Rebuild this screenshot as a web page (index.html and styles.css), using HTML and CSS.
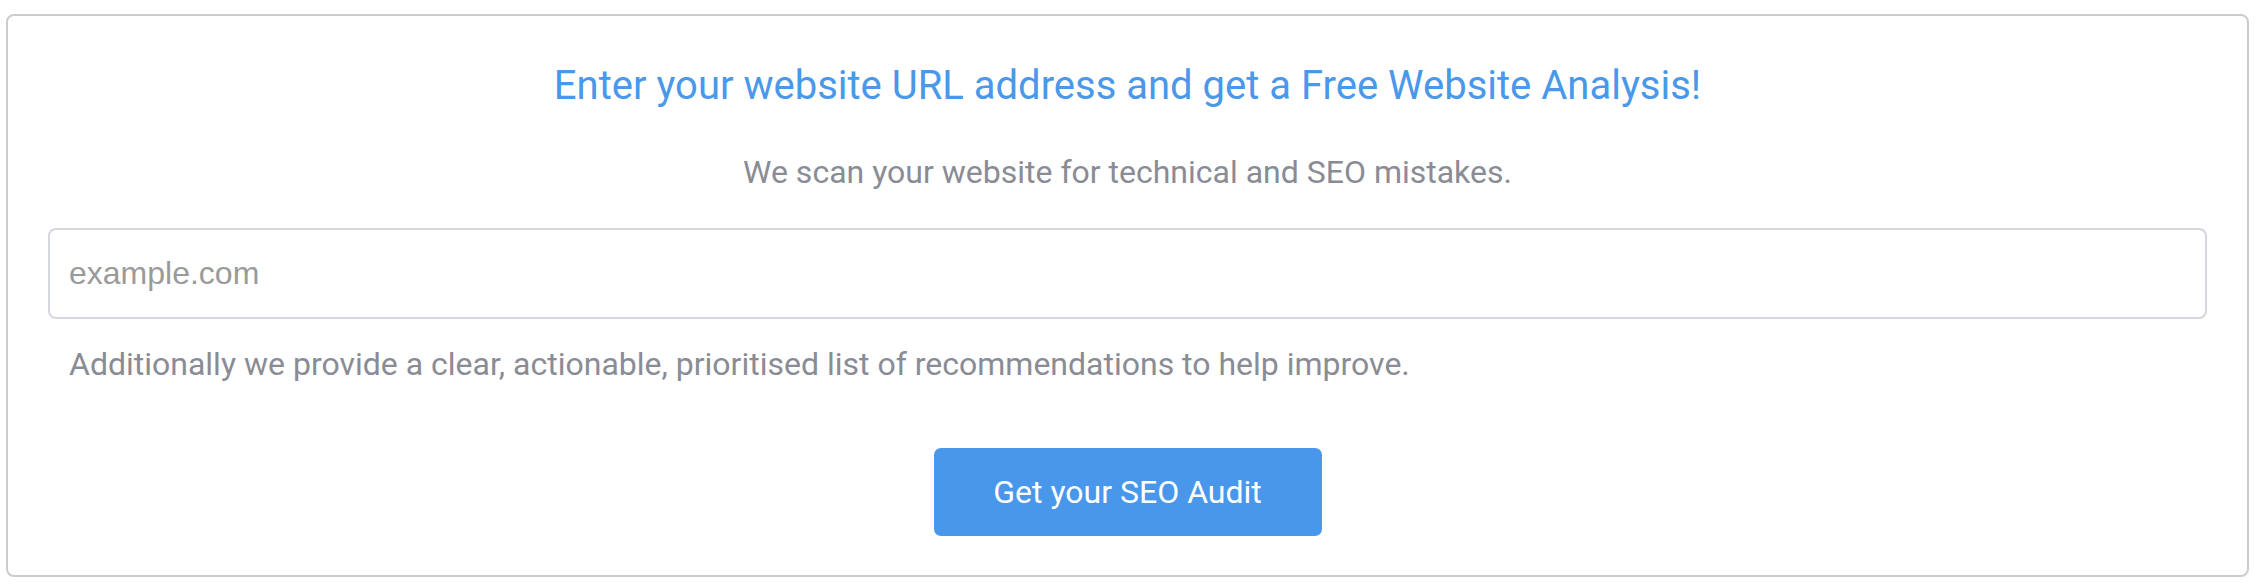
FILE: index.html
```html
<!DOCTYPE html>
<html lang="en">
<head>
<meta charset="utf-8">
<title>Free Website Analysis</title>
<link rel="stylesheet" href="styles.css">
</head>
<body>
<div class="page">
  <form class="card" onsubmit="return false;">
    <h1 class="title">Enter your website URL address and get a Free Website Analysis!</h1>
    <p class="lead">We scan your website for technical and SEO mistakes.</p>
    <input class="url" type="text" placeholder="example.com">
    <p class="help">Additionally we provide a clear, actionable, prioritised list of recommendations to help improve.</p>
    <div class="actions">
      <button class="btn" type="submit">Get your SEO Audit</button>
    </div>
  </form>
</div>
</body>
</html>
```
FILE: styles.css
```css
html, body {
  margin: 0;
  padding: 0;
  background: #ffffff;
}
.page {
  padding: 14px 15px 7px 6px;
}
.card {
  box-sizing: border-box;
  height: 563px;
  border: 2px solid #cccccc;
  border-radius: 8px;
  padding: 46px 40px 39px 40px;
  display: flex;
  flex-direction: column;
  font-family: Roboto, "Liberation Sans", sans-serif;
}
.title {
  margin: 0;
  font-size: 40px;
  line-height: 48px;
  font-weight: 400;
  color: #4a98ea;
  text-align: center;
}
.lead {
  margin: 43px 0 0 0;
  font-size: 32px;
  line-height: 38px;
  color: #8a8c95;
  text-align: center;
}
.url {
  box-sizing: border-box;
  margin-top: 37px;
  width: 100%;
  height: 91px;
  border: 2px solid #d4d7de;
  border-radius: 8px;
  padding: 0 19px;
  font-family: "Liberation Sans", Arial, sans-serif;
  font-size: 32px;
  color: #333;
  outline: none;
  background: #fff;
}
.url::placeholder {
  color: #9a9a9a;
}
.help {
  margin: 25px 0 0 0;
  padding-left: 21px;
  font-size: 32px;
  line-height: 40px;
  color: #8a8c95;
}
.actions {
  margin-top: auto;
  display: flex;
  justify-content: center;
}
.btn {
  box-sizing: border-box;
  height: 88px;
  width: 388px;
  border: 0;
  border-radius: 7px;
  background: #4897eb;
  color: #ffffff;
  font-family: Roboto, "Liberation Sans", sans-serif;
  font-size: 32px;
  cursor: pointer;
}
```
